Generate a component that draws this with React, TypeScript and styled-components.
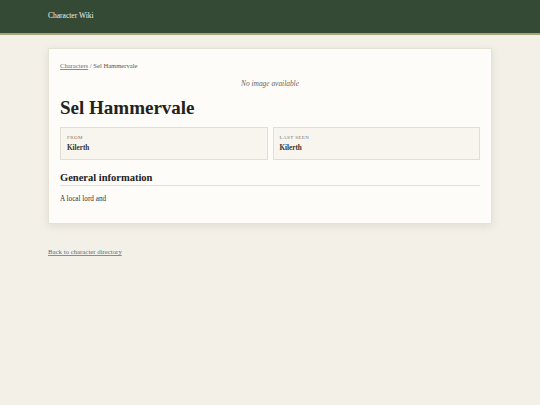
import React from "react";
import styled, { createGlobalStyle } from "styled-components";

const Global = createGlobalStyle`
  html, body { margin: 0; padding: 0; background: #f3f0e8; }
  body { font-family: "Liberation Serif", "DejaVu Serif", serif; color: #2a2a26; }
  * { box-sizing: border-box; }
`;

const Header = styled.header`
  height: 35px;
  background: #344a35;
  border-bottom: 2px solid #a9a27a;
  display: flex;
  align-items: center;
  padding: 0 48px;
`;

const Brand = styled.div`
  color: #f4f1e6;
  font-size: 7.5px;
  margin-top: -2px;
`;

const Main = styled.main`
  padding: 13px 48px 0;
`;

const Card = styled.section`
  background: #fdfcf8;
  border: 1px solid #e6e2d6;
  box-shadow: 0 2px 8px rgba(90, 80, 50, 0.12);
  padding: 12px 11px 20px;
`;

const Crumbs = styled.nav`
  font-size: 6.6px;
  line-height: 8px;
  color: #555;
  margin-top: 1px;
`;

const Link = styled.a`
  color: #55708c;
  text-decoration: underline;
  text-decoration-color: #7d8fa2;
  text-decoration-thickness: 1px;
  text-underline-offset: 1px;
`;

const NoImage = styled.div`
  text-align: center;
  font-style: italic;
  font-size: 7.4px;
  color: #666;
  margin-top: 9px;
`;

const Title = styled.h1`
  font-size: 19px;
  font-weight: bold;
  margin: 9px 0 0;
  color: #222;
`;

const Facts = styled.div`
  display: grid;
  grid-template-columns: 1fr 1fr;
  gap: 5px;
  margin-top: 8px;
`;

const Fact = styled.div`
  background: #f7f5ee;
  border: 1px solid #e2ded2;
  height: 33px;
  padding: 7px 6px;
`;

const Label = styled.div`
  font-size: 5px;
  letter-spacing: 0.4px;
  text-transform: uppercase;
  color: #777;
`;

const Value = styled.div`
  font-size: 7.2px;
  font-weight: bold;
  color: #333;
  margin-top: 4px;
`;

const SectionTitle = styled.h2`
  font-size: 10.5px;
  font-weight: bold;
  margin: 12px 0 0;
  padding-bottom: 2px;
  border-bottom: 1px solid #e4e0d4;
  color: #222;
`;

const Para = styled.p`
  font-size: 7.2px;
  margin: 9px 0 0;
  color: #333;
`;

const Back = styled.div`
  margin-top: 23px;
  font-size: 6.8px;
  line-height: 9px;
`;

export default function App() {
  return (
    <>
      <Global />
      <Header>
        <Brand>Character Wiki</Brand>
      </Header>
      <Main>
        <Card>
          <Crumbs>
            <Link href="#">Characters</Link> / Sel Hammervale
          </Crumbs>
          <NoImage>No image available</NoImage>
          <Title>Sel Hammervale</Title>
          <Facts>
            <Fact>
              <Label>From</Label>
              <Value>Kilerth</Value>
            </Fact>
            <Fact>
              <Label>Last seen</Label>
              <Value>Kilerth</Value>
            </Fact>
          </Facts>
          <SectionTitle>General information</SectionTitle>
          <Para>A local lord and</Para>
        </Card>
        <Back>
          <Link href="#">Back to character directory</Link>
        </Back>
      </Main>
    </>
  );
}
